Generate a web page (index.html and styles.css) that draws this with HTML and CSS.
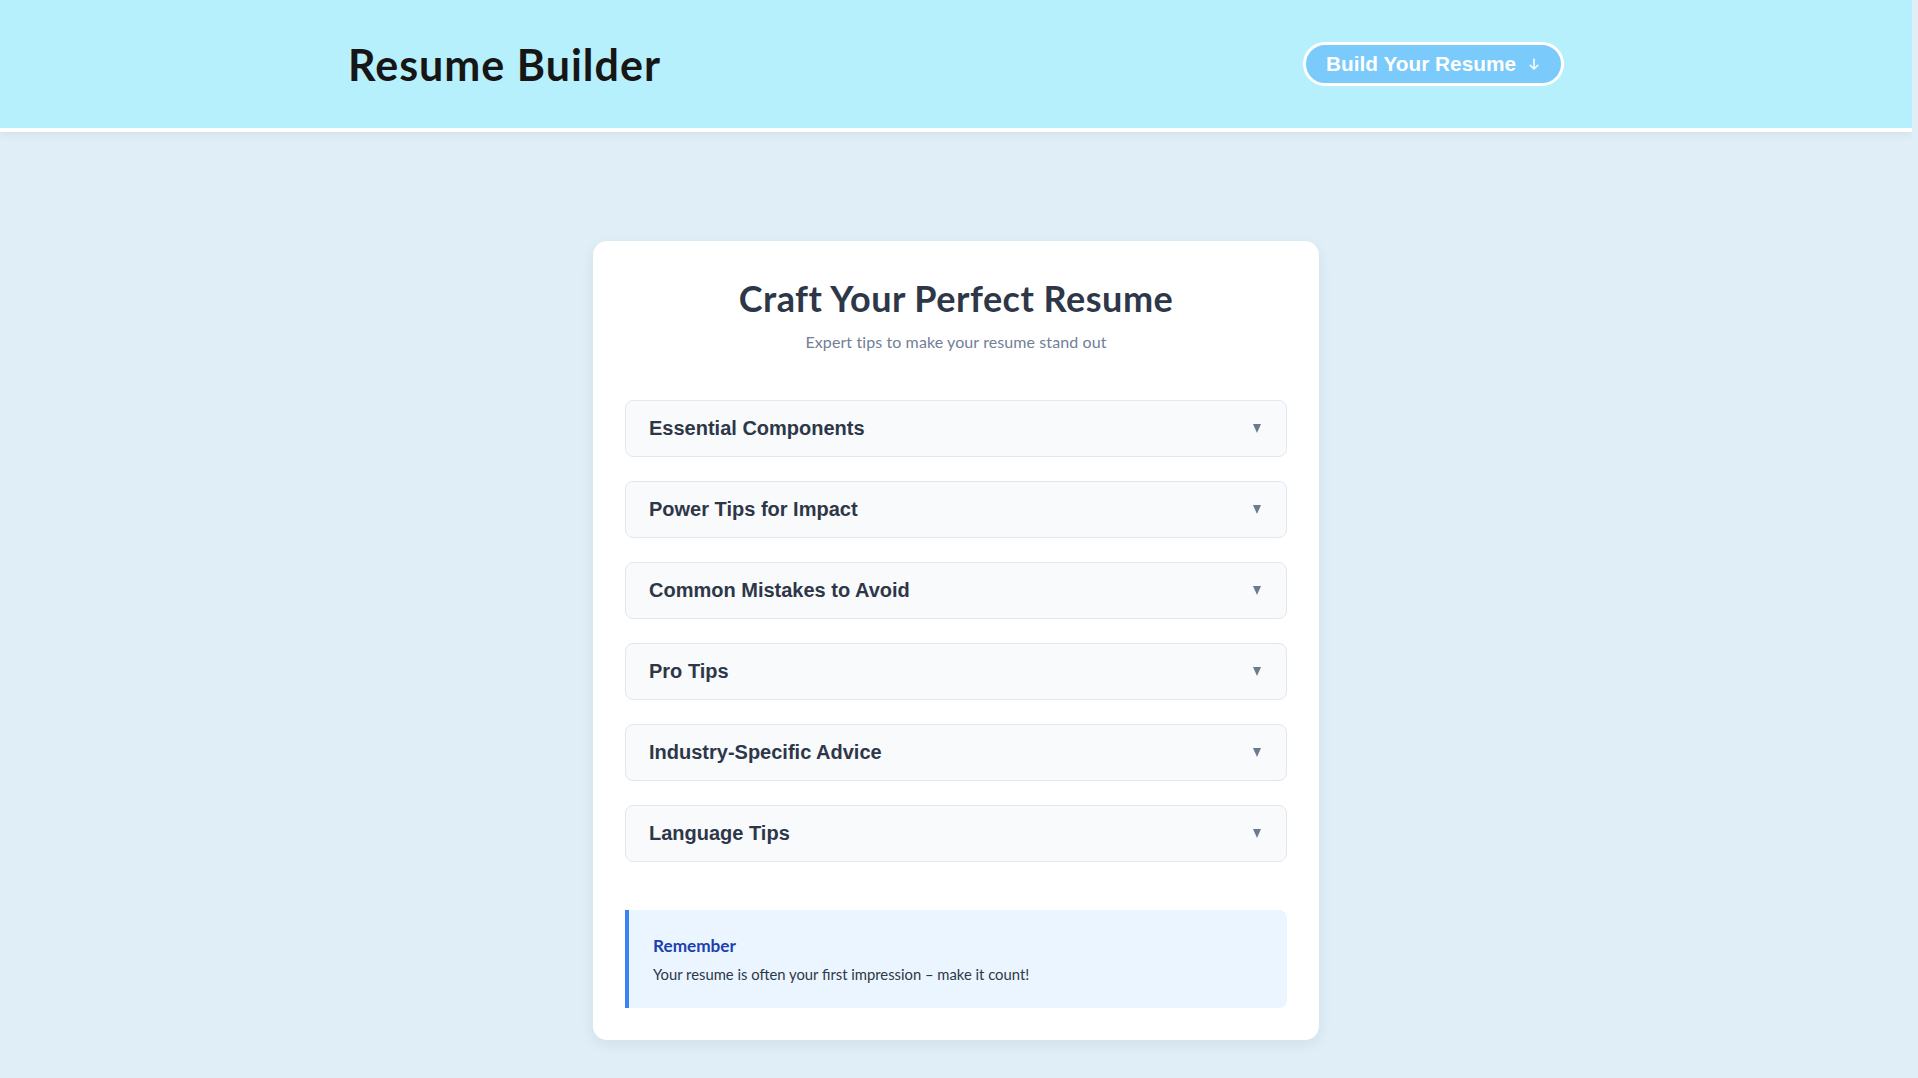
FILE: index.html
```html
<!DOCTYPE html>
<html lang="en">
<head>
    <meta charset="UTF-8">
    <meta name="viewport" content="width=device-width, initial-scale=1.0">
    <title>Resume Builder</title>
    <link rel="stylesheet" href="styles.css">
</head>
<body>

<header class="site-header">
    <div class="header-inner">
        <h1 class="logo">Resume Builder</h1>
        <a href="#tips" class="build-btn">Build Your Resume
            <svg class="btn-arrow" width="10" height="12" viewBox="0 0 10 12" fill="none" stroke="#fff" stroke-width="1.5" stroke-linecap="round" stroke-linejoin="round"><path d="M5 1v10M1.2 7.2 5 11l3.8-3.8"/></svg>
        </a>
    </div>
</header>

<main class="page">
    <section class="tips-card" id="tips">
        <div class="tips-head">
            <h2>Craft Your Perfect Resume</h2>
            <p>Expert tips to make your resume stand out</p>
        </div>

        <div class="accordion" id="accordion"></div>

        <div class="remember">
            <h4>Remember</h4>
            <p>Your resume is often your first impression – make it count!</p>
        </div>
    </section>
</main>

<script>
    // --- Tips data ---
    const tips = [
        { title: "Essential Components", items: ["Contact information at the top", "A short professional summary", "Work experience in reverse order", "Education, skills and certifications"] },
        { title: "Power Tips for Impact", items: ["Start bullets with strong action verbs", "Quantify results with numbers", "Tailor each resume to the job posting"] },
        { title: "Common Mistakes to Avoid", items: ["Typos and grammar errors", "Long blocks of text", "Unprofessional email addresses"] },
        { title: "Pro Tips", items: ["Keep it to one or two pages", "Save and send as PDF", "Use keywords from the job description"] },
        { title: "Industry-Specific Advice", items: ["Tech: list projects and your stack", "Creative: link to your portfolio", "Finance: highlight certifications"] },
        { title: "Language Tips", items: ["Write in a confident, active voice", "Avoid buzzwords and cliches", "Stay consistent with tense"] }
    ];

    // --- Build the accordion ---
    const accordion = document.getElementById('accordion');
    tips.forEach((tip, i) => {
        accordion.innerHTML += `
            <div class="acc-item" id="tip${i}">
                <button class="acc-head" onclick="toggleTip(${i})">${tip.title}<span class="caret"></span></button>
                <ul class="acc-body">${tip.items.map(t => `<li>${t}</li>`).join("")}</ul>
            </div>
        `;
    });

    function toggleTip(i) {
        document.getElementById('tip' + i).classList.toggle('open');
    }
</script>

</body>
</html>
```

FILE: styles.css
```css
html { background: #e0eff7; }
body {
    margin: 0 6px 0 0;
    background: #e0eff7;
    color: #2d3748;
    font-family: 'Liberation Sans', Arial, sans-serif;
}

/* header */
.site-header {
    background: #b6f0fd;
    border-bottom: 4px solid #fff;
    box-shadow: 0 3px 8px rgba(0,0,0,0.06);
}
.header-inner {
    max-width: 1280px;
    height: 128px;
    margin: 0 auto;
    padding: 0 2rem;
    box-sizing: border-box;
    display: flex;
    align-items: center;
    justify-content: space-between;
}
.logo {
    margin: 0;
    font-family: Lato, 'Noto Sans', sans-serif;
    font-size: 43px;
    font-weight: 700;
    color: #161616;
    letter-spacing: 1px;
}
.build-btn {
    display: flex;
    align-items: center;
    gap: 13px;
    padding: 7px 22px 7px 20px;
    background: #7acafc;
    border: 3px solid #fff;
    border-radius: 999px;
    color: #fff;
    font-size: 20.8px;
    font-weight: 700;
    line-height: 24px;
    text-decoration: none;
}
.btn-arrow { display: block; }

/* tips card */
.page { padding: 109px 2rem 80px; }
.tips-card {
    max-width: 726px;
    margin: 0 auto;
    padding: 32px;
    box-sizing: border-box;
    background: #fff;
    border-radius: 14px;
    box-shadow: 0 4px 14px rgba(0,0,0,0.07);
}
.tips-head { text-align: center; margin-bottom: 46px; }
.tips-head h2 {
    margin: 0;
    font-family: Lato, 'Noto Sans', sans-serif;
    font-size: 36px;
    line-height: 51px;
    color: #2d3748;
    letter-spacing: 0.5px;
}
.tips-head p {
    margin: 6px 0 0;
    font-family: Lato, 'Noto Sans', sans-serif;
    font-size: 16px;
    line-height: 24px;
    color: #718096;
    letter-spacing: 0.1px;
}
.accordion { display: flex; flex-direction: column; gap: 24px; }
.acc-item {
    background: #f8fafc;
    border: 1px solid #e2e8f0;
    border-radius: 8px;
}
.acc-head {
    display: flex;
    align-items: center;
    justify-content: space-between;
    width: 100%;
    padding: 16px 25px 16px 23px;
    background: none;
    border: none;
    font-family: 'Liberation Sans', Arial, sans-serif;
    font-size: 20px;
    font-weight: 700;
    line-height: 23px;
    color: #2d3748;
    text-align: left;
    cursor: pointer;
}
.caret {
    width: 0;
    height: 0;
    border-left: 4.5px solid transparent;
    border-right: 4.5px solid transparent;
    border-top: 9px solid #6b7a90;
}
.acc-body { display: none; margin: 0; padding: 0 24px 18px 44px; line-height: 1.7; color: #4a5568; }
.acc-item.open .acc-body { display: block; }
.acc-item.open .caret { transform: rotate(180deg); }

.remember {
    margin-top: 48px;
    padding: 24px 24px 23px;
    background: #ebf5ff;
    border-left: 4px solid #3b82f6;
    border-radius: 0 8px 8px 0;
    font-family: Lato, 'Noto Sans', sans-serif;
}
.remember h4 {
    margin: 0 0 6px;
    font-size: 17.2px;
    line-height: 24px;
    color: #1e40af;
}
.remember p { margin: 0; font-size: 14.8px; line-height: 21px; color: #2d3748; }
```
